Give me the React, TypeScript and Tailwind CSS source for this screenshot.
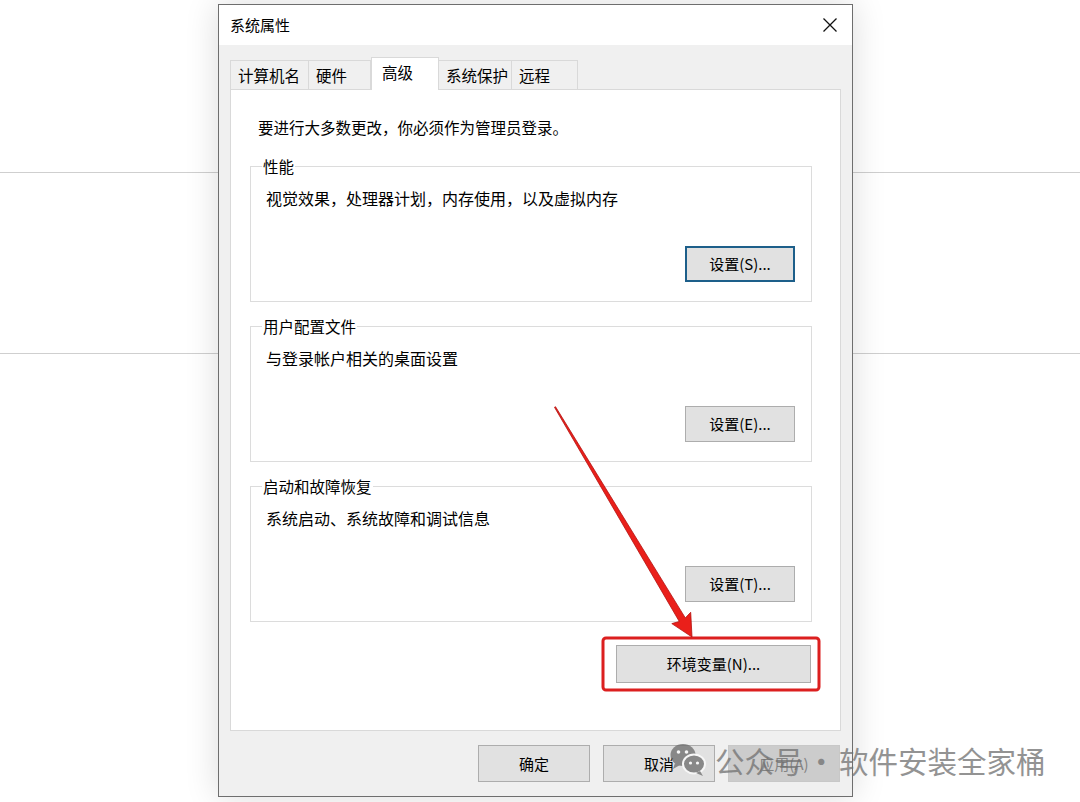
import React from "react";

const font = { fontFamily: '"Noto Sans CJK SC", "Liberation Sans", sans-serif' };

const tabs = [
  { label: "计算机名", w: "w-[79px]" },
  { label: "硬件", w: "w-[62px]" },
  { label: "高级", w: "w-[68px]", active: true },
  { label: "系统保护", w: "w-[73px]" },
  { label: "远程", w: "w-[66px]" },
];

const groups = [
  { title: "性能", desc: "视觉效果，处理器计划，内存使用，以及虚拟内存", btn: "设置(S)...", focus: true },
  { title: "用户配置文件", desc: "与登录帐户相关的桌面设置", btn: "设置(E)..." },
  { title: "启动和故障恢复", desc: "系统启动、系统故障和调试信息", btn: "设置(T)..." },
];

const Btn = ({ children, focus, disabled, className = "" }: { children: React.ReactNode; focus?: boolean; disabled?: boolean; className?: string }) => (
  <div
    className={
      "flex items-center justify-center text-[15px] leading-[20px] " +
      (focus
        ? "border-2 border-[#1d5f8a] bg-[#e1e1e1] text-black "
        : disabled
        ? "border border-[#c8c8c8] bg-[#cccccc] text-[#838383] "
        : "border border-[#adadad] bg-[#e1e1e1] text-black ") +
      className
    }
  >
    {children}
  </div>
);

const BgSide = () => (
  <div className="flex-1 flex flex-col">
    <div className="h-[172px]" />
    <div className="h-[181px] border-t border-[#cfcfcf]" />
    <div className="border-t border-[#cfcfcf]" />
  </div>
);

const App = () => (
  <div className="w-[1080px] h-[802px] bg-white relative overflow-hidden flex" style={font}>
    <div className="w-[218px] shrink-0 flex">
      <BgSide />
    </div>

    {/* dialog */}
    <div className="w-[635px] h-[793px] mt-[4px] shrink-0 border border-[#6e6e6e] bg-[#f0f0f0] flex flex-col relative z-10 shadow-[0_0_32px_rgba(0,0,0,0.14)]">
      <div className="h-[40px] bg-white flex items-center justify-between pl-[11px] pr-[14px]">
        <span className="text-[15px] leading-[20px] text-black">系统属性</span>
        <svg width="16" height="16" viewBox="0 0 16 16">
          <path d="M1.5 1.5 L14.5 14.5 M14.5 1.5 L1.5 14.5" stroke="#111" strokeWidth="1.3" />
        </svg>
      </div>

      <div className="flex-1 px-[11px] pt-[12px] flex flex-col">
        {/* tabs */}
        <div className="flex items-end h-[32px] relative z-10">
          {tabs.map((t) =>
            t.active ? (
              <div
                key={t.label}
                className={t.w + " h-[33px] -mb-px bg-white border border-[#d9d9d9] border-b-0 flex items-start pt-[4px] pl-[10px] text-[15.5px] leading-[20px] text-black"}
              >
                {t.label}
              </div>
            ) : (
              <div
                key={t.label}
                className={t.w + " h-[29px] border border-[#d9d9d9] border-b-0 border-l-0 first:border-l bg-[#f0f0f0] flex items-center pl-[7px] text-[15.5px] leading-[20px] text-black"}
              >
                {t.label}
              </div>
            )
          )}
        </div>

        {/* panel */}
        <div className="w-[611px] h-[642px] bg-white border border-[#d9d9d9] pt-[27px] pl-[19px] flex flex-col">
          <div className="pl-[8px] text-[15.5px] leading-[20px] text-black">要进行大多数更改，你必须作为管理员登录。</div>

          {groups.map((g, i) => (
            <fieldset
              key={g.title}
              className={(i === 0 ? "mt-[19px] " : "mt-[14px] ") + "w-[562px] border border-[#dcdcdc] pl-[15px] pr-[16px] pb-[19px]"}
            >
              <legend className="ml-[-4px] px-[1px] text-[15.5px] leading-[20px] text-black">{g.title}</legend>
              <div className="pt-[12px] text-[16px] leading-[20px] text-black">{g.desc}</div>
              <div className="flex justify-end mt-[38px]">
                <Btn focus={g.focus} className="w-[110px] h-[36px]">
                  {g.btn}
                </Btn>
              </div>
            </fieldset>
          ))}

          <div className="w-[562px] flex justify-end mt-[23px]">
            <Btn className="w-[195px] h-[38px] mr-[1px]">环境变量(N)...</Btn>
          </div>
        </div>

        {/* bottom buttons */}
        <div className="flex justify-end gap-[13px] mt-[14px] pr-[1px]">
          <Btn className="w-[112px] h-[37px]">确定</Btn>
          <Btn className="w-[112px] h-[37px]">取消</Btn>
          <Btn disabled className="w-[112px] h-[37px]">应用(A)</Btn>
        </div>
      </div>
    </div>

    <div className="flex-1 flex">
      <BgSide />
    </div>

    {/* red annotation */}
    <svg className="absolute left-0 top-0 z-20 pointer-events-none" width="1080" height="802">
      <rect x="603" y="638" width="216" height="52" rx="3" fill="none" stroke="#dc1f1f" strokeWidth="3" />
      <polygon
        points="555.5,406.7 685.3,617.9 690.7,612.3 692,637 671.8,623.6 679.3,621.5 554.5,407.3"
        fill="#ea1f1a"
        stroke="#b3100e"
        strokeWidth="0.8"
        strokeLinejoin="round"
      />
    </svg>

    {/* watermark */}
    <div className="absolute left-[667px] top-[740px] z-30 flex items-center opacity-75">
      <svg width="46" height="40" viewBox="0 0 46 40">
        <ellipse cx="16" cy="15" rx="12.5" ry="11" fill="#6b6b6b" />
        <path d="M8 23 L6 29 L13 25 Z" fill="#6b6b6b" />
        <ellipse cx="27" cy="24" rx="11" ry="9.5" fill="#6b6b6b" stroke="#ffffff" strokeWidth="2" />
        <path d="M33 31 L36 36 L29 33 Z" fill="#6b6b6b" />
        <circle cx="11.5" cy="12" r="1.8" fill="#fff" />
        <circle cx="19.5" cy="12" r="1.8" fill="#fff" />
        <circle cx="23.5" cy="23" r="1.6" fill="#fff" />
        <circle cx="30.5" cy="23" r="1.6" fill="#fff" />
      </svg>
      <span className="ml-[2px] text-[29.5px] leading-[40px] text-[#707070] whitespace-nowrap">
        公众号<span className="mx-[3px]">·</span>软件安装全家桶
      </span>
    </div>
  </div>
);

export default App;
